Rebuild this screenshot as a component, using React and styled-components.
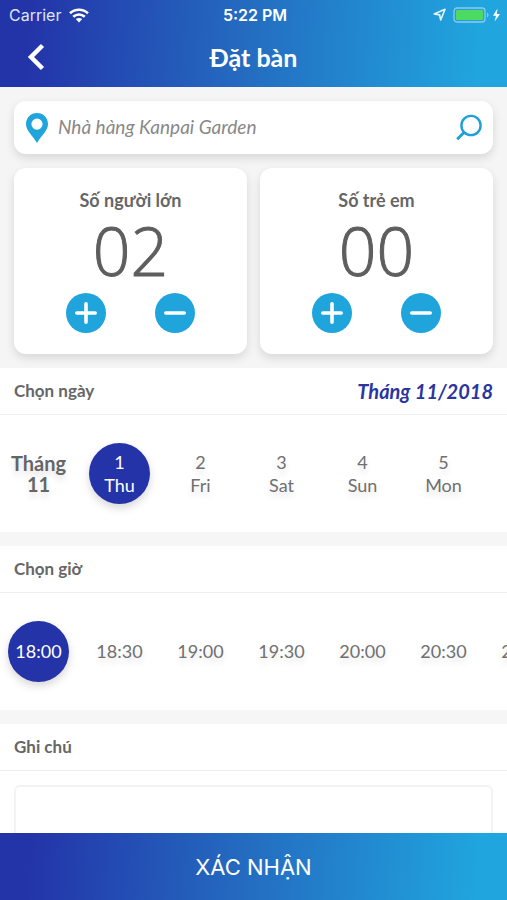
import React, { useState } from 'react';
import styled, { createGlobalStyle, css } from 'styled-components';

const brandGradient = 'linear-gradient(93deg, #2334a9 6%, #246bc0 48%, #20a5de 94%)';
const bodyFont = 'Lato, "Open Sans", sans-serif';
const systemFont = 'Inter, "Liberation Sans", sans-serif';

const GlobalStyle = createGlobalStyle`
  * { box-sizing: border-box; }
  body { margin: 0; background: #fff; color: #666; font-family: ${bodyFont}; font-size: 17px; }
  button, input, textarea { font: inherit; color: inherit; }
  button { border: 0; padding: 0; background: none; cursor: pointer; }
  h1, h2, p { margin: 0; }
`;

const Screen = styled.div`
  display: flex;
  flex-direction: column;
  height: 100vh;
  overflow: hidden;
`;

const Header = styled.header`
  flex: none;
  background: ${brandGradient};
  color: #fff;
`;

const StatusBar = styled.div`
  display: grid;
  grid-template-columns: 1fr auto 1fr;
  align-items: center;
  height: 30px;
  padding: 0 6px 0 9px;
  font-family: ${systemFont};
  font-size: 16px;
`;

const Carrier = styled.div`
  display: flex;
  align-items: center;
  gap: 8px;
  color: #dfe5f8;
`;

const Clock = styled.time`
  font-weight: 600;
`;

const StatusIcons = styled.div`
  display: flex;
  align-items: center;
  justify-content: flex-end;
  gap: 7px;
`;

const NavBar = styled.nav`
  display: grid;
  grid-template-columns: 46px 1fr 46px;
  align-items: center;
  height: 57px;
  padding: 0 13px 3px;
`;

const BackButton = styled.button`
  display: flex;
  align-items: center;
  justify-content: center;
  height: 44px;
`;

const Title = styled.h1`
  font-size: 25px;
  line-height: 32px;
  font-weight: 700;
  text-align: center;
`;

const Content = styled.main`
  flex: 1;
  min-height: 0;
  overflow-y: auto;
  scrollbar-width: none;
`;

const BookingPanel = styled.section`
  display: flex;
  flex-direction: column;
  gap: 14px;
  padding: 14px;
  background: #f5f5f5;
`;

const cardSurface = css`
  background: #fff;
  border-radius: 12px;
  box-shadow: 0 4px 10px rgba(0, 0, 0, 0.12);
`;

const SearchCard = styled.form`
  ${cardSurface}
  display: flex;
  align-items: center;
  gap: 9px;
  height: 53px;
  padding: 0 11px;
`;

const SearchInput = styled.input`
  flex: 1;
  min-width: 0;
  border: 0;
  padding: 0 0 2px;
  outline: 0;
  background: none;
  color: #888;
  font-size: 19px;
  font-style: italic;
`;

const SearchButton = styled.button`
  display: flex;
`;

const Counters = styled.div`
  display: grid;
  grid-template-columns: 1fr 1fr;
  gap: 13px;
`;

const CounterCard = styled.section`
  ${cardSurface}
  display: flex;
  flex-direction: column;
  align-items: center;
  padding: 20px 12px 21px;
`;

const CounterTitle = styled.h2`
  font-size: 18px;
  line-height: 24px;
  font-weight: 700;
`;

const CounterValue = styled.output`
  font-family: "Open Sans", "Noto Sans", sans-serif;
  font-size: 66px;
  line-height: 76px;
  font-weight: 300;
  padding-bottom: 5px;
  color: #5e5e5e;
  -webkit-text-stroke: 1px #5e5e5e;
`;

const CounterActions = styled.div`
  display: flex;
  gap: 49px;
`;

const RoundButton = styled.button`
  display: flex;
  align-items: center;
  justify-content: center;
  width: 40px;
  height: 40px;
  border-radius: 50%;
  background: #20a4dc;
`;

const Section = styled.section`
  & + & {
    border-top: 14px solid #f6f6f6;
  }
`;

const SectionHeader = styled.div`
  display: flex;
  align-items: center;
  justify-content: space-between;
  height: 47px;
  padding: 0 14px;
  border-bottom: 1px solid #eee;
`;

const SectionTitle = styled.h2`
  font-size: 17px;
  line-height: 24px;
  font-weight: 700;
`;

const MonthLabel = styled.p`
  font-size: 20px;
  line-height: 24px;
  font-weight: 700;
  font-style: italic;
  color: #2a35a0;
`;

const Strip = styled.div`
  display: flex;
  align-items: center;
  gap: 20px;
  height: 117px;
  padding: 0 8px;
  overflow-x: auto;
  scrollbar-width: none;
`;

const StripMonth = styled.p`
  flex: none;
  width: 61px;
  font-size: 20px;
  line-height: 21px;
  font-weight: 700;
  text-align: center;
  text-shadow: 0 5px 6px rgba(0, 0, 0, 0.12);
`;

const Choice = styled.button`
  flex: none;
  width: 61px;
  height: 61px;
  border-radius: 50%;
  font-size: 18px;
  line-height: 23px;
  color: #707070;
  text-shadow: 0 5px 6px rgba(0, 0, 0, 0.12);

  ${({ $selected }) =>
    $selected &&
    css`
      background: #2533a8;
      color: #fff;
      text-shadow: none;
      box-shadow: 0 4px 8px rgba(0, 0, 0, 0.16);
    `}
`;

const ChoiceLine = styled.span`
  display: block;
`;

const NoteBody = styled.div`
  padding: 14px;
`;

const NoteInput = styled.textarea`
  display: block;
  width: 100%;
  height: 110px;
  padding: 12px;
  border: 2px solid #f3f3f3;
  border-radius: 6px;
  outline: 0;
  resize: none;
`;

const ConfirmButton = styled.button`
  flex: none;
  height: 67px;
  background: ${brandGradient};
  color: #fff;
  font-family: ${systemFont};
  font-size: 22px;
`;

const WifiIcon = () => (
  <svg width="20" height="15" viewBox="0 0 20 15" fill="none" stroke="#fff" strokeWidth="2.6" aria-hidden="true">
    <path d="M1 5.2C6 .6 14 .6 19 5.2" />
    <path d="M4.2 8.7c3.4-3 8.200-3 11.600 0" />
    <path d="M6.800 11.100c2-1.500 4.400-1.500 6.400 0L10 14.400z" fill="#fff" stroke="none" />
  </svg>
);

const LocationArrow = () => (
  <svg width="13" height="14" viewBox="0 0 13 14" fill="none" stroke="#e6f5ff" strokeWidth="1.600" strokeLinejoin="round" aria-hidden="true">
    <path d="M12 1.300 7.700 12 6.600 6.900 1.200 6z" />
  </svg>
);

const BatteryIcon = () => (
  <svg width="48" height="16" viewBox="0 0 48 16" aria-hidden="true">
    <rect x="1" y="1" width="31" height="14" rx="3" fill="none" stroke="#8fc9ee" strokeWidth="1.300" />
    <rect x="3" y="3" width="27" height="10" rx="1" fill="#4cda62" />
    <path d="M34 5.500c2 .8 2 4.200 0 5z" fill="#8fc9ee" />
    <path d="M44.500 1.500 40 8.700h3L41.700 14.500 47 6.900h-3.200z" fill="#fff" />
  </svg>
);

const BackIcon = () => (
  <svg width="18" height="28" viewBox="0 0 18 28" fill="none" stroke="#fff" strokeWidth="4.500" aria-hidden="true">
    <path d="M15.500 2.500 4 14l11.500 11.500" />
  </svg>
);

const PinIcon = () => (
  <svg width="24" height="30" viewBox="0 0 24 30" fill="#20a4dc" fillRule="evenodd" aria-hidden="true">
    <path d="M12 0C5.600 0 1 4.800 1 11c0 6.700 6.700 11.500 11 19 4.300-7.500 11-12.300 11-19C23 4.800 18.400 0 12 0zm0 5.500a5.600 5.600 0 1 1 0 11.200 5.600 5.600 0 0 1 0-11.200z" />
  </svg>
);

const SearchIcon = () => (
  <svg width="26" height="27" viewBox="0 0 26 27" fill="none" stroke="#1d9fda" strokeWidth="2.400" aria-hidden="true">
    <circle cx="15" cy="11.500" r="9.600" />
    <path d="M8.200 18.300 1.200 25.300" strokeWidth="2.900" />
  </svg>
);

const SignIcon = ({ plus }) => (
  <svg width="24" height="24" viewBox="0 0 24 24" stroke="#fff" strokeWidth="3.600" strokeLinecap="round" aria-hidden="true">
    <path d={plus ? 'M2.800 12h18.400M12 2.800v18.400' : 'M2.800 12h18.400'} />
  </svg>
);

function Counter({ label, initial }) {
  const [count, setCount] = useState(initial);
  return (
    <CounterCard aria-label={label}>
      <CounterTitle>{label}</CounterTitle>
      <CounterValue>{String(count).padStart(2, '0')}</CounterValue>
      <CounterActions>
        <RoundButton type="button" aria-label={`Tăng ${label}`} onClick={() => setCount(count + 1)}>
          <SignIcon plus />
        </RoundButton>
        <RoundButton type="button" aria-label={`Giảm ${label}`} onClick={() => setCount(Math.max(0, count - 1))}>
          <SignIcon />
        </RoundButton>
      </CounterActions>
    </CounterCard>
  );
}

const days = [
  [1, 'Thu'],
  [2, 'Fri'],
  [3, 'Sat'],
  [4, 'Sun'],
  [5, 'Mon'],
];
const times = ['18:00', '18:30', '19:00', '19:30', '20:00', '20:30', '21:00'];

export default function App() {
  const [day, setDay] = useState(1);
  const [time, setTime] = useState('18:00');

  return (
    <>
      <GlobalStyle />
      <Screen>
        <Header>
          <StatusBar>
            <Carrier>
              Carrier <WifiIcon />
            </Carrier>
            <Clock>5:22 PM</Clock>
            <StatusIcons>
              <LocationArrow />
              <BatteryIcon />
            </StatusIcons>
          </StatusBar>
          <NavBar>
            <BackButton type="button" aria-label="Quay lại">
              <BackIcon />
            </BackButton>
            <Title>Đặt bàn</Title>
          </NavBar>
        </Header>

        <Content>
          <BookingPanel>
            <SearchCard onSubmit={(event) => event.preventDefault()}>
              <PinIcon />
              <SearchInput aria-label="Nhà hàng" defaultValue="Nhà hàng Kanpai Garden" />
              <SearchButton type="submit" aria-label="Tìm kiếm">
                <SearchIcon />
              </SearchButton>
            </SearchCard>
            <Counters>
              <Counter label="Số người lớn" initial={2} />
              <Counter label="Số trẻ em" initial={0} />
            </Counters>
          </BookingPanel>

          <Section>
            <SectionHeader>
              <SectionTitle>Chọn ngày</SectionTitle>
              <MonthLabel>Tháng 11/2018</MonthLabel>
            </SectionHeader>
            <Strip>
              <StripMonth>Tháng 11</StripMonth>
              {days.map(([date, name]) => (
                <Choice
                  key={date}
                  type="button"
                  $selected={day === date}
                  aria-pressed={day === date}
                  onClick={() => setDay(date)}
                >
                  <ChoiceLine>{date}</ChoiceLine>
                  <ChoiceLine>{name}</ChoiceLine>
                </Choice>
              ))}
            </Strip>
          </Section>

          <Section>
            <SectionHeader>
              <SectionTitle>Chọn giờ</SectionTitle>
            </SectionHeader>
            <Strip>
              {times.map((slot) => (
                <Choice
                  key={slot}
                  type="button"
                  $selected={time === slot}
                  aria-pressed={time === slot}
                  onClick={() => setTime(slot)}
                >
                  {slot}
                </Choice>
              ))}
            </Strip>
          </Section>

          <Section>
            <SectionHeader>
              <SectionTitle as="label" htmlFor="note">
                Ghi chú
              </SectionTitle>
            </SectionHeader>
            <NoteBody>
              <NoteInput id="note" />
            </NoteBody>
          </Section>
        </Content>

        <ConfirmButton type="button">XÁC NHẬN</ConfirmButton>
      </Screen>
    </>
  );
}
